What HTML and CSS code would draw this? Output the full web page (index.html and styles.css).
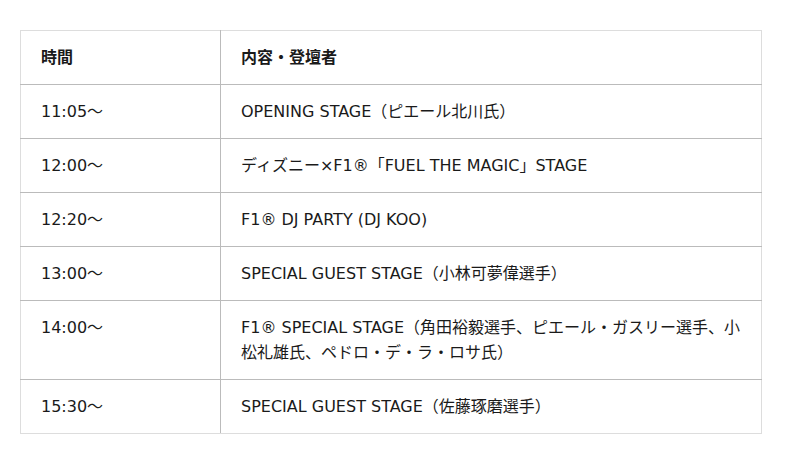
FILE: index.html
```html
<!DOCTYPE html>
<html lang="ja">
<head>
<meta charset="utf-8">
<link rel="stylesheet" href="styles.css">
</head>
<body>
<div class="wrap">
<table class="schedule">
  <thead>
    <tr><th class="time">時間</th><th class="content">内容・登壇者</th></tr>
  </thead>
  <tbody>
    <tr><td class="time">11:05～</td><td>OPENING STAGE（ピエール北川氏）</td></tr>
    <tr><td class="time">12:00～</td><td>ディズニー×F1®「FUEL THE MAGIC」STAGE</td></tr>
    <tr><td class="time">12:20～</td><td>F1® DJ PARTY (DJ KOO)</td></tr>
    <tr><td class="time">13:00～</td><td>SPECIAL GUEST STAGE（小林可夢偉選手）</td></tr>
    <tr><td class="time">14:00～</td><td>F1® SPECIAL STAGE（角田裕毅選手、ピエール・ガスリー選手、小松礼雄氏、ペドロ・デ・ラ・ロサ氏）</td></tr>
    <tr><td class="time">15:30～</td><td>SPECIAL GUEST STAGE（佐藤琢磨選手）</td></tr>
  </tbody>
</table>
</div>
</body>
</html>
```
FILE: styles.css
```css
html, body {
  margin: 0;
  padding: 0;
  background: #fff;
}
.wrap {
  padding: 30px 38px 0 20px;
}
.schedule {
  width: 742px;
  border-collapse: collapse;
  border: 1px solid #dddddd;
  font-family: "DejaVu Sans", "Noto Sans CJK JP", sans-serif;
  font-size: 16px;
  line-height: 25px;
  color: #1a1a1a;
}
.schedule th,
.schedule td {
  text-align: left;
  vertical-align: top;
  padding: 14px 20px 14px 20px;
  border-top: 1px solid #bbbbbb;
  border-bottom: 1px solid #bbbbbb;
}
.schedule thead th {
  border-top: 1px solid #dddddd;
  font-weight: bold;
}
.schedule tbody tr:last-child td {
  border-bottom: 1px solid #dddddd;
}
.schedule .time {
  width: 159px;
  border-right: 1px solid #bbbbbb;
}
```
